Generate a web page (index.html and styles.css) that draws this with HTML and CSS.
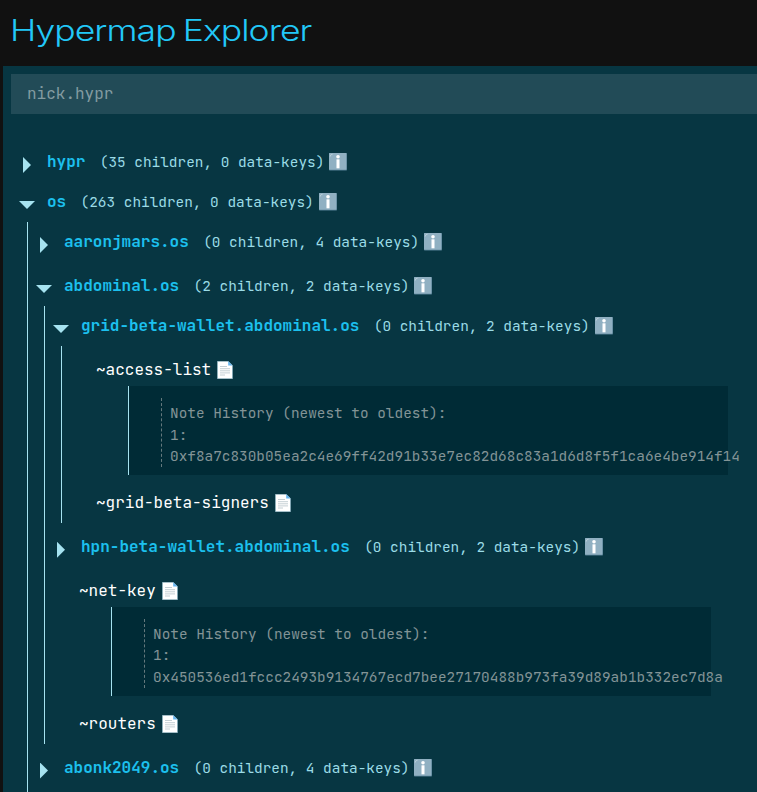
FILE: index.html
```
<!DOCTYPE html>
<html lang="en">
<head>
<meta charset="utf-8">
<title>Hypermap Explorer</title>
<link rel="stylesheet" href="styles.css">
</head>
<body>
<svg class="defs" aria-hidden="true">
  <symbol id="info" viewBox="0 0 18 18">
    <rect width="18" height="17.5" rx=".7" fill="#547f93"/>
    <rect width="17.4" height="16.7" rx=".6" fill="#90b0c2"/>
    <path d="M1.2 3.6Q1.2 1.2 3.6 1.2" fill="none" stroke="#b9ced9" stroke-width="1"/>
    <circle cx="9" cy="3.8" r="1.8" fill="#fff"/>
    <rect x="7.5" y="6.3" width="3" height="9" fill="#fff"/>
  </symbol>
  <symbol id="page" viewBox="0 0 16 18">
    <path d="M.4.2h10.8l4.3 4.2v13.4H.4z" fill="#fff" stroke="#82aec0" stroke-width=".6"/>
    <path d="M11.2.2v4.2h4.3z" fill="#65b5f0"/>
    <path d="M3 5.5h7M3 7.7h10M3 9.8h10M3 11.9h10M3 14h5" stroke="#bdc9cf" stroke-width=".9"/>
  </symbol>
</svg>
<header><h1>Hypermap Explorer</h1></header>
<main>
  <input class="search" placeholder="nick.hypr" aria-label="Search">
  <div class="tree">
    <div class="node">
      <div class="row"><i class="arrow"></i><b>hypr</b><span class="count">(35 children, 0 data-keys)</span><svg class="info"><use href="#info"/></svg></div>
    </div>
    <div class="node">
      <div class="row"><i class="arrow open"></i><b>os</b><span class="count">(263 children, 0 data-keys)</span><svg class="info"><use href="#info"/></svg></div>
      <div class="children">
        <div class="node">
          <div class="row"><i class="arrow"></i><b>aaronjmars.os</b><span class="count">(0 children, 4 data-keys)</span><svg class="info"><use href="#info"/></svg></div>
        </div>
        <div class="node">
          <div class="row"><i class="arrow open"></i><b>abdominal.os</b><span class="count">(2 children, 2 data-keys)</span><svg class="info"><use href="#info"/></svg></div>
          <div class="children">
            <div class="node">
              <div class="row"><i class="arrow open"></i><b>grid-beta-wallet.abdominal.os</b><span class="count">(0 children, 2 data-keys)</span><svg class="info"><use href="#info"/></svg></div>
              <div class="children">
                <div class="key">
                  <div class="key-row">~access-list<svg class="page"><use href="#page"/></svg></div>
                  <div class="note"><div class="history">Note History (newest to oldest):<br>1:<br>0xf8a7c830b05ea2c4e69ff42d91b33e7ec82d68c83a1d6d8f5f1ca6e4be914f14</div></div>
                </div>
                <div class="key">
                  <div class="key-row">~grid-beta-signers<svg class="page"><use href="#page"/></svg></div>
                </div>
              </div>
            </div>
            <div class="node">
              <div class="row"><i class="arrow"></i><b>hpn-beta-wallet.abdominal.os</b><span class="count">(0 children, 2 data-keys)</span><svg class="info"><use href="#info"/></svg></div>
            </div>
            <div class="key">
              <div class="key-row">~net-key<svg class="page"><use href="#page"/></svg></div>
              <div class="note"><div class="history">Note History (newest to oldest):<br>1:<br>0x450536ed1fccc2493b9134767ecd7bee27170488b973fa39d89ab1b332ec7d8a</div></div>
            </div>
            <div class="key">
              <div class="key-row">~routers<svg class="page"><use href="#page"/></svg></div>
            </div>
          </div>
        </div>
        <div class="node">
          <div class="row"><i class="arrow"></i><b>abonk2049.os</b><span class="count">(0 children, 4 data-keys)</span><svg class="info"><use href="#info"/></svg></div>
        </div>
      </div>
    </div>
  </div>
</main>
</body>
</html>
```
FILE: styles.css
```
* { box-sizing: border-box; }
html, body { height: 100%; }
body {
  margin: 0;
  overflow: hidden;
  background: #111;
  color: #fff;
  font: 16px/24px "JetBrains Mono", "DejaVu Sans Mono", monospace;
}
.defs { display: none; }
header { height: 66px; padding: 10px 0 0 10px; }
h1 {
  display: inline-block;
  margin: 0;
  font: 300 29.5px/40px Inter, sans-serif;
  letter-spacing: -.8px;
  word-spacing: -1.6px;
  color: #22c8f8;
  white-space: nowrap;
  transform: scaleX(1.205);
  transform-origin: left;
}
main {
  height: 740px;
  margin-left: 3px;
  padding: 8px 0 0 8px;
  background: #073642;
}
.search {
  display: block;
  width: 100%;
  height: 40px;
  padding: 0 16px 2px;
  border: 0;
  border-radius: 0;
  background: #224b57;
  color: #fff;
  font: inherit;
}
.search::placeholder { color: #839ba1; opacity: 1; }
.tree { padding-top: 28px; }
.row {
  display: flex;
  align-items: center;
  height: 40px;
  padding-left: 8px;
  white-space: nowrap;
}
.row b { color: #1cc0ee; }
.arrow {
  width: 16px;
  height: 16px;
  margin: 6px 12px 0 0;
  background: #a6e3f0;
  clip-path: polygon(4px 0, 12px 8px, 4px 16px);
}
.arrow.open { clip-path: polygon(0 4px, 16px 4px, 8px 12px); }
.count {
  margin-left: 14.4px;
  font-size: 14.4px;
  color: #9bdce7;
}
.info { width: 18px; height: 18px; margin-left: 5px; flex: none; }
.children { margin-left: 16px; border-left: 1px solid #a6e3f0; }
.children > .node + .node { margin-top: 4px; }
.children > .node:last-child { padding-bottom: 8px; }
.key { padding: 4px 0; }
.key-row {
  display: flex;
  align-items: center;
  height: 36px;
  padding: 4px 0 0 34px;
}
.page { width: 16px; height: 18px; margin-left: 6px; flex: none; }
.note {
  width: 600px;
  margin-left: 66px;
  padding: 12px 0 8px 32px;
  border-left: 1px solid #a6e3f0;
  background: #002b36;
}
.history {
  padding: 4px 0 0 8px;
  border-left: 1px dashed #64797d;
  font-size: 14.4px;
  line-height: 21.6px;
  color: #839496;
  white-space: nowrap;
}
```
